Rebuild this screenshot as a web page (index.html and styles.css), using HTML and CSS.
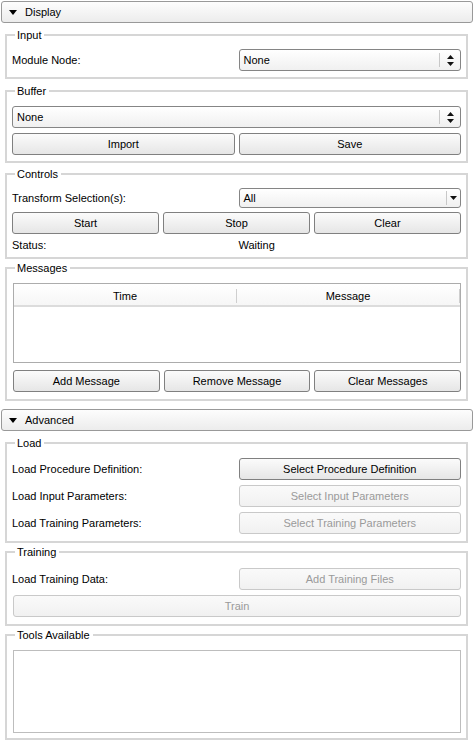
FILE: index.html
```html
<!DOCTYPE html>
<html>
<head>
<meta charset="utf-8">
<link rel="stylesheet" href="styles.css">
</head>
<body>
<div class="panel">
  <div class="collapse"><svg class="tri" width="8" height="5" viewBox="0 0 8 5"><polygon points="0,0 8,0 4,5" fill="#000"/></svg><span>Display</span></div>

  <fieldset class="group g-input">
    <legend>Input</legend>
    <div class="grid2">
      <span class="label">Module Node:</span>
      <div class="combo"><span class="val">None</span><span class="sep"></span><svg class="spin" width="7" height="11" viewBox="0 0 7 11"><polygon points="0,4 3.5,0 7,4" fill="#111"/><polygon points="0,7 7,7 3.5,11" fill="#111"/></svg></div>
    </div>
  </fieldset>

  <fieldset class="group g-buffer">
    <legend>Buffer</legend>
    <div class="grid2">
      <div class="combo span2"><span class="val">None</span><span class="sep"></span><svg class="spin" width="7" height="11" viewBox="0 0 7 11"><polygon points="0,4 3.5,0 7,4" fill="#111"/><polygon points="0,7 7,7 3.5,11" fill="#111"/></svg></div>
      <button class="btn">Import</button>
      <button class="btn">Save</button>
    </div>
  </fieldset>

  <fieldset class="group g-controls">
    <legend>Controls</legend>
    <div class="grid2">
      <span class="label">Transform Selection(s):</span>
      <div class="combo drop"><span class="val">All</span><span class="sep"></span><svg class="down" width="7" height="4" viewBox="0 0 7 4"><polygon points="0,0 7,0 3.5,4" fill="#111"/></svg></div>
    </div>
    <div class="grid3 ctlbtns">
      <button class="btn">Start</button>
      <button class="btn">Stop</button>
      <button class="btn">Clear</button>
    </div>
    <div class="grid2 status">
      <span class="label">Status:</span>
      <span class="label">Waiting</span>
    </div>
  </fieldset>

  <fieldset class="group g-messages">
    <legend>Messages</legend>
    <div class="table">
      <div class="thead">
        <div class="th">Time</div>
        <div class="th">Message</div>
        <div class="th rest"></div>
      </div>
    </div>
    <div class="grid3 msgbtns">
      <button class="btn">Add Message</button>
      <button class="btn">Remove Message</button>
      <button class="btn">Clear Messages</button>
    </div>
  </fieldset>

  <div class="collapse adv"><svg class="tri" width="8" height="5" viewBox="0 0 8 5"><polygon points="0,0 8,0 4,5" fill="#000"/></svg><span>Advanced</span></div>

  <fieldset class="group g-load">
    <legend>Load</legend>
    <div class="grid2">
      <span class="label">Load Procedure Definition:</span>
      <button class="btn">Select Procedure Definition</button>
      <span class="label">Load Input Parameters:</span>
      <button class="btn" disabled>Select Input Parameters</button>
      <span class="label">Load Training Parameters:</span>
      <button class="btn" disabled>Select Training Parameters</button>
    </div>
  </fieldset>

  <fieldset class="group g-training">
    <legend>Training</legend>
    <div class="grid2">
      <span class="label">Load Training Data:</span>
      <button class="btn" disabled>Add Training Files</button>
      <button class="btn span2 inset" disabled>Train</button>
    </div>
  </fieldset>

  <fieldset class="group g-tools">
    <legend>Tools Available</legend>
    <div class="list"></div>
  </fieldset>
</div>
</body>
</html>
```

FILE: styles.css
```css
html, body {
  margin: 0;
  padding: 0;
  background: #ffffff;
}
body {
  width: 474px;
  height: 743px;
  overflow: hidden;
  font-family: "Liberation Sans", Arial, sans-serif;
  font-size: 11px;
  color: #000;
}
.panel {
  display: flex;
  flex-direction: column;
  padding-top: 1px;
}
.collapse {
  height: 20px;
  margin: 0 1px 0 1px;
  border: 1px solid #999;
  border-radius: 3px;
  background: linear-gradient(#fdfdfd, #ececec);
  display: flex;
  align-items: center;
  padding-left: 7px;
  gap: 8px;
}
.collapse.adv {
  margin-top: 8px;
}
.tri {
  display: block;
}
.group {
  margin: 5px 6px 0 5px;
  padding: 7px 5px 6px 5px;
  border: 2px solid #d6d6d6;
  border-radius: 0;
  min-width: 0;
}
.group legend {
  margin-left: 3px;
  padding: 0 3px 0 2px;
  line-height: 14px;
  height: 14px;
}
.g-buffer {
  padding-top: 8px;
}
.g-controls {
  margin-top: 4px;
  padding-bottom: 5px;
}
.g-messages {
  margin-top: 2px;
  padding-top: 8px;
  padding-bottom: 7px;
}
.g-load {
  margin-top: 5px;
  padding-top: 8px;
  padding-bottom: 7px;
}
.g-training {
  margin-top: 2px;
  padding-top: 9px;
  padding-bottom: 7px;
}
.g-tools {
  margin-top: 2px;
  padding-top: 8px;
  padding-bottom: 5px;
}
.grid2 {
  display: grid;
  grid-template-columns: 1fr 1fr;
  column-gap: 4px;
  row-gap: 5px;
  align-items: center;
}
.grid3 {
  display: grid;
  grid-template-columns: 1fr 1fr 1fr;
  column-gap: 4px;
}
.span2 {
  grid-column: 1 / span 2;
}
.label {
  line-height: 14px;
}
.ctlbtns {
  margin-top: 4px;
}
.status {
  margin-top: 4px;
}
.combo {
  height: 20px;
  border: 1px solid #858585;
  border-radius: 3px;
  background: linear-gradient(#ffffff, #f0f0f0);
  display: flex;
  align-items: center;
  padding-left: 4px;
}
.combo .val {
  flex: 1;
}
.combo .sep {
  width: 1px;
  height: 14px;
  background: #c8c8c8;
}
.combo .spin {
  margin: 0 6px 0 7px;
}
.combo.drop {
  height: 18px;
}
.combo .down {
  margin: 0 3px 0 3px;
}
.btn {
  height: 22px;
  margin: 0;
  padding: 0;
  border: 1px solid #808080;
  border-radius: 3px;
  background: linear-gradient(#fbfbfb, #e6e6e6);
  font-family: inherit;
  font-size: 11px;
  color: #000;
}
.btn:disabled {
  border-color: #c9c9c9;
  background: linear-gradient(#fafafa, #f1f1f1);
  color: #9a9a9a;
}
.inset {
  margin-left: 1px;
}
.table {
  margin-left: 1px;
  height: 78px;
  border: 1px solid #acacac;
  background: #fff;
}
.thead {
  display: flex;
  height: 19px;
  padding-top: 2px;
  border-bottom: 2px solid #dcdcdc;
  align-items: center;
  background: linear-gradient(#ffffff, #f6f6f6);
}
.th {
  text-align: center;
  flex: 0 0 222px;
  height: 14px;
  line-height: 14px;
  border-right: 1px solid #cfcfcf;
}
.th.rest {
  flex: 1;
  border-right: none;
}
.msgbtns {
  margin-top: 7px;
  margin-left: 1px;
}
.list {
  margin-left: 1px;
  height: 81px;
  border: 1px solid #bdbdbd;
  background: #fff;
}
```
